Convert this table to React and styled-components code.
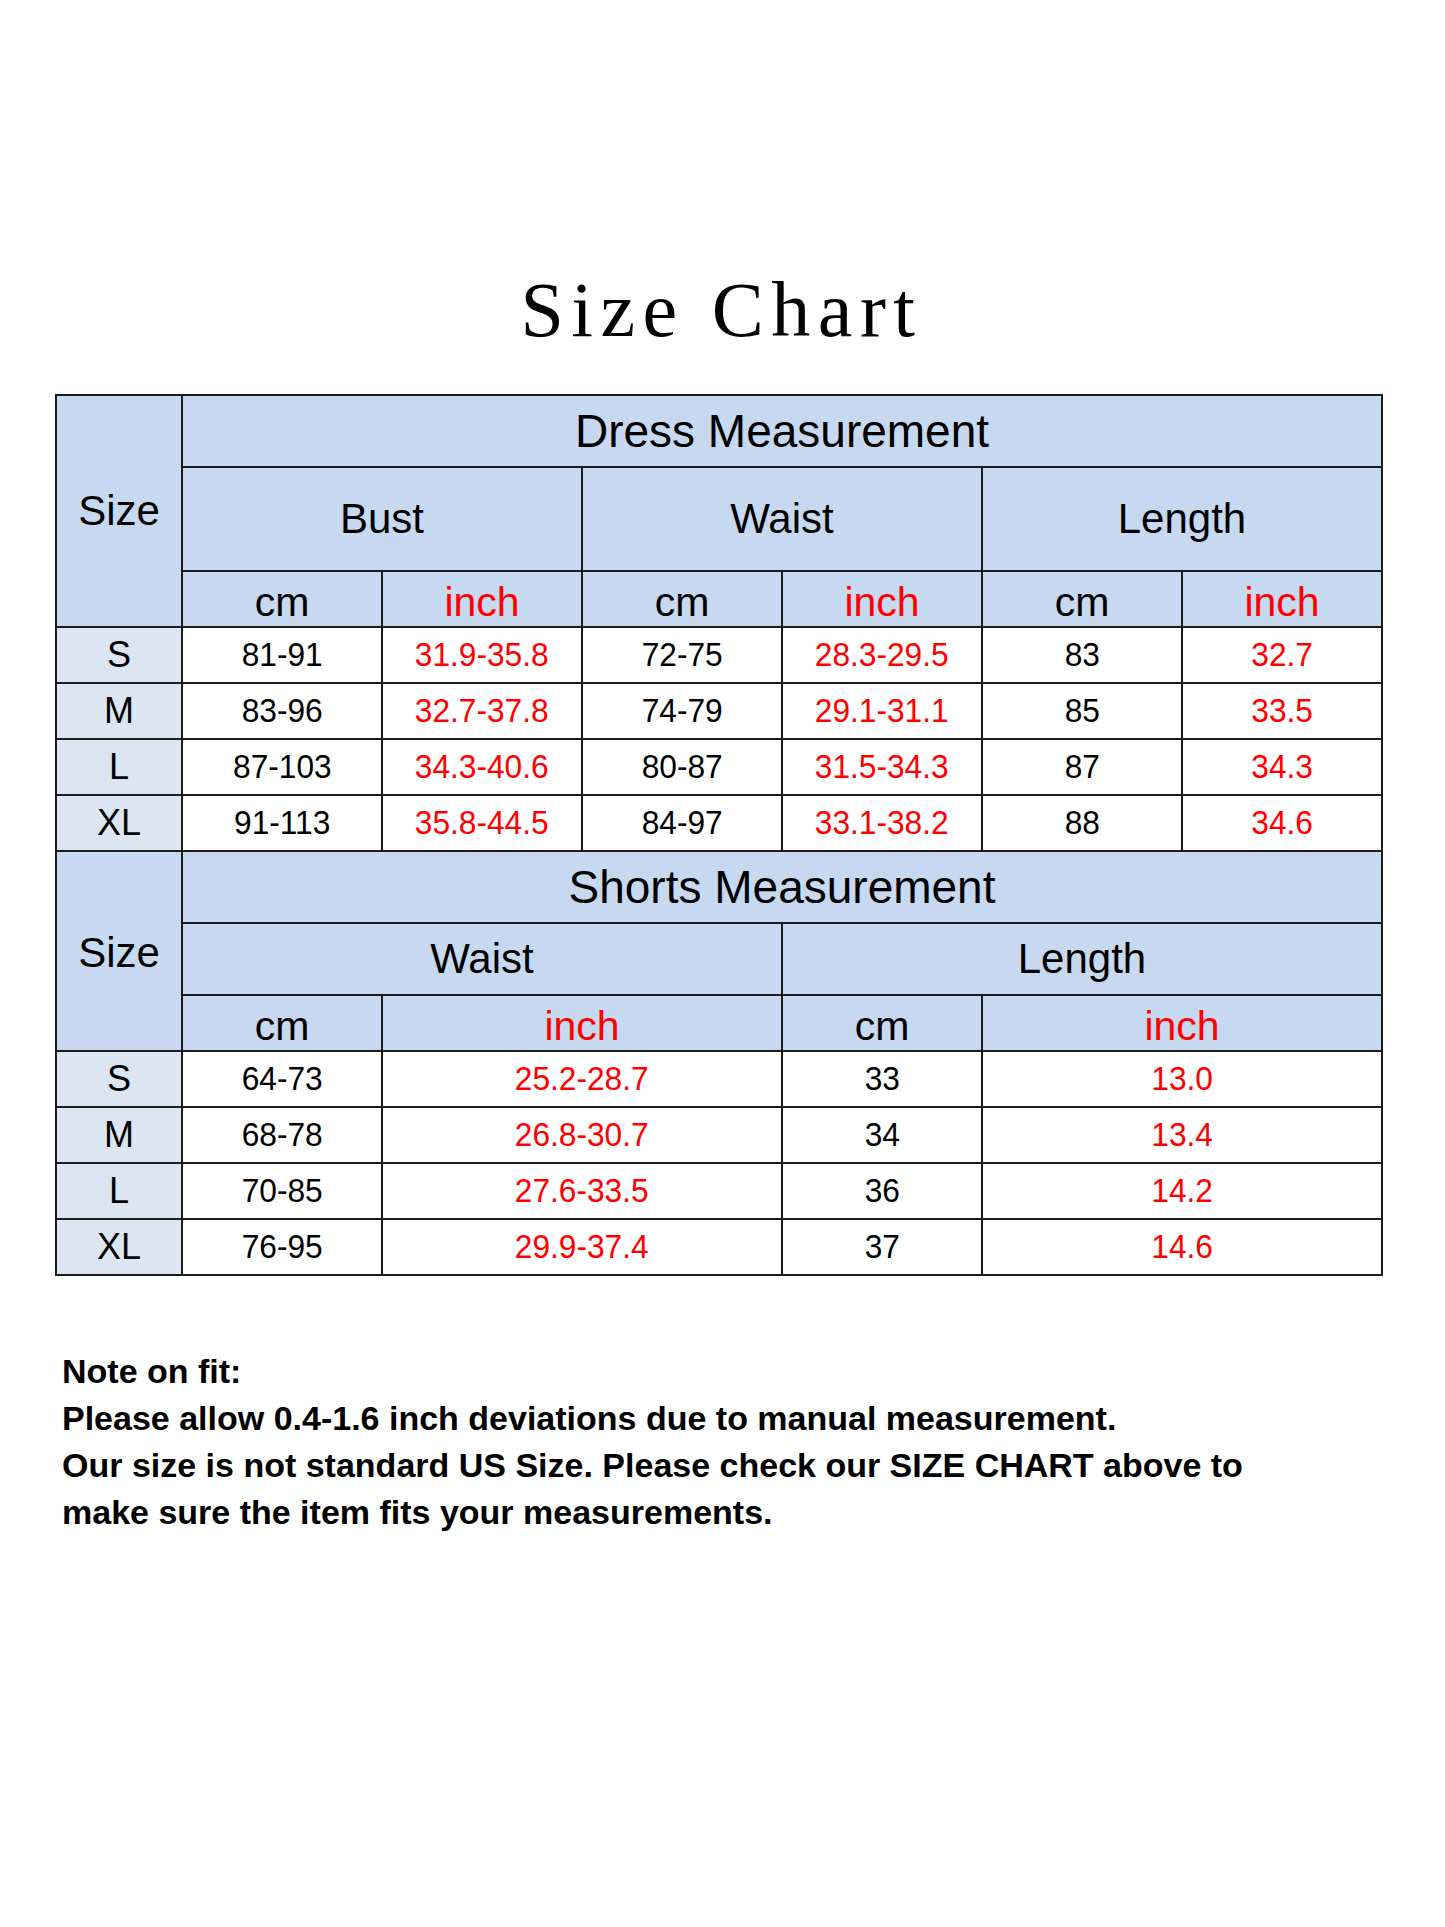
import React from "react";
import styled, { createGlobalStyle } from "styled-components";

const Global = createGlobalStyle`
  html, body { margin: 0; padding: 0; background: #ffffff; }
  body { font-family: "Liberation Sans", Arial, sans-serif; color: #000; }
`;

const Page = styled.div`
  width: 1445px;
  height: 1927px;
  box-sizing: border-box;
  padding: 270px 0 0 55px;
  display: flex;
  flex-direction: column;
`;

const Title = styled.h1`
  margin: 0 0 44px 0;
  width: 1328px;
  text-align: center;
  font-family: "Liberation Serif", "Times New Roman", serif;
  font-weight: 400;
  font-size: 78px;
  line-height: 80px;
  letter-spacing: 7.5px;
  padding-left: 5px;
  box-sizing: border-box;
`;

const Table = styled.div`
  width: 1328px;
  background: #1c1c1c;
  padding: 2px;
  box-sizing: border-box;
  display: grid;
  gap: 2px;
`;

const Section = styled.div`
  display: grid;
  grid-template-columns: 124px repeat(6, 198px);
  grid-template-rows: ${(p) => p.$rows};
  gap: 2px;
`;

const Cell = styled.div`
  background: ${(p) => (p.$tone === "head" ? "#c6d9f0" : p.$tone === "side" ? "#dce6f2" : "#ffffff")};
  color: ${(p) => (p.$red ? "#ff0000" : "#000")};
  grid-column: ${(p) => p.$col || "auto"};
  grid-row: ${(p) => p.$row || "auto"};
  display: flex;
  align-items: center;
  justify-content: center;
  font-size: ${(p) => p.$size || 32}px;
  padding-top: ${(p) => p.$pt || 0}px;
  box-sizing: border-box;
  white-space: nowrap;
`;

const Narrow = styled.span`
  display: inline-block;
  transform: scaleX(${(p) => p.$sx || 1});
`;

const Notes = styled.div`
  margin-top: 72px;
  padding-left: 7px;
  font-family: "Liberation Sans", Arial, sans-serif;
  font-weight: 700;
  font-size: 34px;
  line-height: 47px;
`;

const NoteLine = styled.div`
  white-space: nowrap;
`;

const dress = [
  ["S", "81-91", "31.9-35.8", "72-75", "28.3-29.5", "83", "32.7"],
  ["M", "83-96", "32.7-37.8", "74-79", "29.1-31.1", "85", "33.5"],
  ["L", "87-103", "34.3-40.6", "80-87", "31.5-34.3", "87", "34.3"],
  ["XL", "91-113", "35.8-44.5", "84-97", "33.1-38.2", "88", "34.6"],
];

const shorts = [
  ["S", "64-73", "25.2-28.7", "33", "13.0"],
  ["M", "68-78", "26.8-30.7", "34", "13.4"],
  ["L", "70-85", "27.6-33.5", "36", "14.2"],
  ["XL", "76-95", "29.9-37.4", "37", "14.6"],
];

const shortsCols = ["2 / 3", "3 / 5", "5 / 6", "6 / 8"];

function Units({ row, cols }) {
  return cols.map((c, i) => (
    <Cell key={c} $tone="head" $col={c} $row={row} $size={41} $pt={6} $red={i % 2 === 1}>
      {i % 2 === 1 ? "inch" : "cm"}
    </Cell>
  ));
}

export default function App() {
  return (
    <>
      <Global />
      <Page>
        <Title>Size Chart</Title>
        <Table>
          <Section $rows="70px 102px 54px repeat(4, 54px)">
            <Cell $tone="head" $col="1" $row="1 / 4" $size={42}>
              Size
            </Cell>
            <Cell $tone="head" $col="2 / 8" $row="1" $size={46}>
              Dress Measurement
            </Cell>
            <Cell $tone="head" $col="2 / 4" $row="2" $size={42}>
              Bust
            </Cell>
            <Cell $tone="head" $col="4 / 6" $row="2" $size={42}>
              Waist
            </Cell>
            <Cell $tone="head" $col="6 / 8" $row="2" $size={42}>
              Length
            </Cell>
            <Units row="3" cols={["2", "3", "4", "5", "6", "7"]} />
            {dress.map((r) =>
              r.map((v, i) => (
                <Cell key={r[0] + i} $tone={i === 0 ? "side" : "body"} $red={i > 0 && i % 2 === 0} $size={i === 0 ? 36 : 33}>
                  <Narrow $sx={i === 0 ? 1 : 0.96}>{v}</Narrow>
                </Cell>
              ))
            )}
          </Section>
          <Section $rows="70px 70px 54px repeat(4, 54px)">
            <Cell $tone="head" $col="1" $row="1 / 4" $size={42} $pt={4}>
              Size
            </Cell>
            <Cell $tone="head" $col="2 / 8" $row="1" $size={46}>
              Shorts Measurement
            </Cell>
            <Cell $tone="head" $col="2 / 5" $row="2" $size={42}>
              Waist
            </Cell>
            <Cell $tone="head" $col="5 / 8" $row="2" $size={42}>
              Length
            </Cell>
            <Units row="3" cols={shortsCols} />
            {shorts.map((r) =>
              r.map((v, i) => (
                <Cell
                  key={r[0] + i}
                  $tone={i === 0 ? "side" : "body"}
                  $col={i === 0 ? "1" : shortsCols[i - 1]}
                  $red={i > 0 && i % 2 === 0}
                  $size={i === 0 ? 36 : 33}
                >
                  <Narrow $sx={i === 0 ? 1 : 0.96}>{v}</Narrow>
                </Cell>
              ))
            )}
          </Section>
        </Table>
        <Notes>
          <NoteLine>Note on fit:</NoteLine>
          <NoteLine>Please allow 0.4-1.6 inch deviations due to manual measurement.</NoteLine>
          <NoteLine>Our size is not standard US Size. Please check our SIZE CHART above to</NoteLine>
          <NoteLine>make sure the item fits your measurements.</NoteLine>
        </Notes>
      </Page>
    </>
  );
}
